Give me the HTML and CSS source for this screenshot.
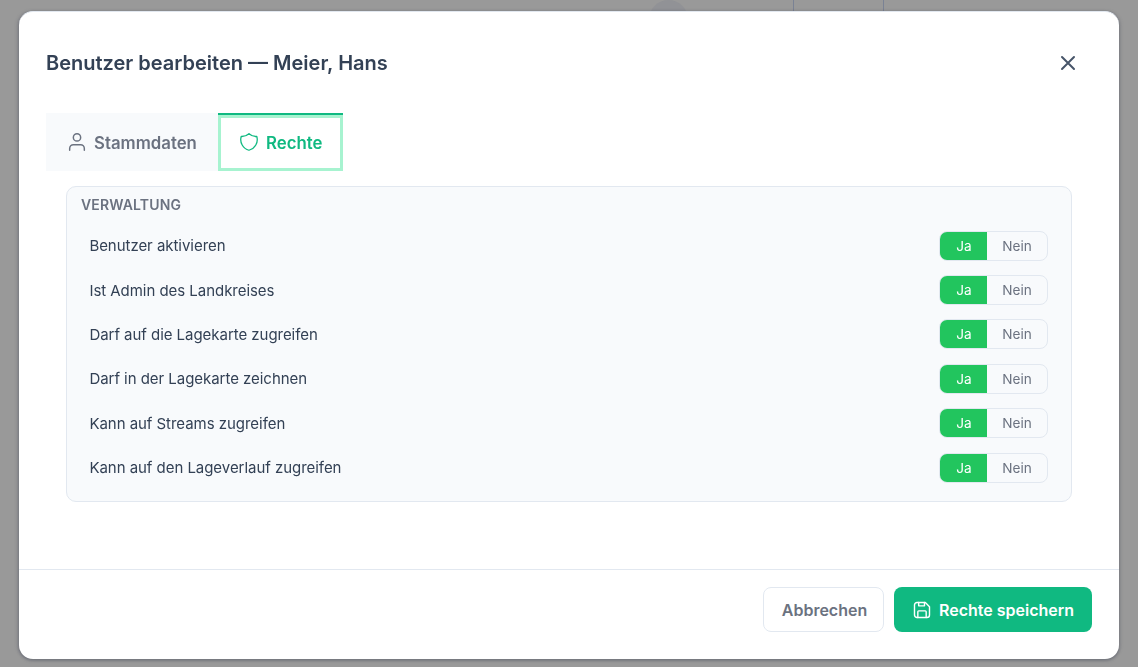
FILE: index.html
```html
<!DOCTYPE html>
<html lang="de">
<head>
<meta charset="utf-8">
<title>Benutzer bearbeiten</title>
<link rel="stylesheet" href="styles.css">
</head>
<body>
<div class="backdrop-page">
  <div class="avatar"></div>
  <div class="cell"></div>
</div>
<div class="overlay">
  <div class="modal">
    <header class="modal-head">
      <h2>Benutzer bearbeiten — Meier, Hans</h2>
      <button class="close" aria-label="Schließen">
        <svg width="24" height="24" viewBox="0 0 24 24" fill="none" stroke="currentColor" stroke-width="2" stroke-linecap="round"><path d="M6 6l12 12M18 6L6 18"/></svg>
      </button>
    </header>
    <nav class="tabs">
      <div class="tab">
        <svg width="22" height="22" viewBox="0 0 24 24" fill="none" stroke="currentColor" stroke-width="1.6" stroke-linecap="round" stroke-linejoin="round"><circle cx="12" cy="7" r="4"/><path d="M4 21v-2a4 4 0 0 1 4-4h8a4 4 0 0 1 4 4v2"/></svg>
        <span>Stammdaten</span>
      </div>
      <div class="tab active">
        <svg width="22" height="22" viewBox="0 0 24 24" fill="none" stroke="currentColor" stroke-width="1.4" stroke-linecap="round" stroke-linejoin="round"><path d="M12 3a12 12 0 0 0 8.500 3A12 12 0 0 1 12 21 12 12 0 0 1 3.500 6 12 12 0 0 0 12 3"/></svg>
        <span>Rechte</span>
      </div>
    </nav>
    <main class="modal-body">
      <section class="panel">
        <h3>VERWALTUNG</h3>
        <div class="row"><span>Benutzer aktivieren</span><div class="toggle"><b>Ja</b><i>Nein</i></div></div>
        <div class="row"><span>Ist Admin des Landkreises</span><div class="toggle"><b>Ja</b><i>Nein</i></div></div>
        <div class="row"><span>Darf auf die Lagekarte zugreifen</span><div class="toggle"><b>Ja</b><i>Nein</i></div></div>
        <div class="row"><span>Darf in der Lagekarte zeichnen</span><div class="toggle"><b>Ja</b><i>Nein</i></div></div>
        <div class="row"><span>Kann auf Streams zugreifen</span><div class="toggle"><b>Ja</b><i>Nein</i></div></div>
        <div class="row"><span>Kann auf den Lageverlauf zugreifen</span><div class="toggle"><b>Ja</b><i>Nein</i></div></div>
      </section>
    </main>
    <footer class="modal-foot">
      <button class="btn ghost">Abbrechen</button>
      <button class="btn primary">
        <svg width="20" height="20" viewBox="0 0 24 24" fill="none" stroke="currentColor" stroke-width="1.7" stroke-linecap="round" stroke-linejoin="round"><path d="M6 3h10l5 5v10a3 3 0 0 1-3 3H6a3 3 0 0 1-3-3V6a3 3 0 0 1 3-3"/><path d="M7 21v-7a1 1 0 0 1 1-1h8a1 1 0 0 1 1 1v7"/><path d="M15 3v4H8V3"/></svg>
        <span>Rechte speichern</span>
      </button>
    </footer>
  </div>
</div>
</body>
</html>
```
FILE: styles.css
```css
* { box-sizing: border-box; }
html, body { margin: 0; height: 100%; overflow: hidden; }
body { background: #999; font-family: Inter, "Liberation Sans", sans-serif; color: #334155; }
.backdrop-page { display: flex; height: 11px; padding-left: 649px; }
.avatar { width: 39px; height: 39px; border-radius: 50%; background: #919296; }
.cell { width: 91px; height: 11px; margin-left: 105px; border-left: 1px solid #7a8294; border-right: 1px solid #7a8294; }
.overlay { position: fixed; inset: 0; padding: 11px 19px 8px; }
.modal { height: 648px; background: #fff; border-radius: 14px; display: flex; flex-direction: column; border-top: 1px solid #e2e8f0; box-shadow: -2px 0 3px rgba(80,85,100,.25), 2px 0 3px rgba(80,85,100,.2), 0 2px 3px rgba(80,85,100,.4); }
.modal-head { display: flex; align-items: center; justify-content: space-between; height: 101px; padding: 0 39px 0 27px; }
h2 { margin: 0; font-size: 20px; line-height: 28px; font-weight: 600; color: #334155; }
.close { border: 0; background: none; padding: 0; width: 24px; height: 24px; color: #475569; display: flex; }
.tabs { display: flex; margin-left: 27px; height: 58px; }
.tab { display: flex; align-items: center; gap: 6px; width: 172px; padding-left: 20px; background: #f8fafc; border-top: 2px solid #f8fafc; color: #6b7280; font-size: 16.8px; font-weight: 600; }
.tab svg { margin-top: -3px; }
.tab.active { width: 125px; padding-left: 20px; background: #fff; color: #10b981; border-top-color: #10b981; box-shadow: inset 0 0 0 3px #a7f3d0; }
.modal-body { flex: 1; padding: 15px 47px 0; }
.panel { height: 316px; background: #f8fafc; border: 1px solid #e2e8f0; border-radius: 10px; padding: 8px 23px 0 14px; }
h3 { margin: 0 0 8.5px; font-size: 14px; line-height: 20px; font-weight: 600; color: #6b7280; letter-spacing: 0.15px; }
.row { display: flex; align-items: center; justify-content: space-between; height: 44.4px; padding-left: 8.4px; font-size: 15px; letter-spacing: -0.04px; color: #334155; }
.toggle { display: flex; width: 109px; height: 30px; border: 1px solid #e2e8f0; border-radius: 8px; overflow: hidden; font-size: 13.6px; }
.toggle b, .toggle i { display: flex; align-items: center; justify-content: center; font-style: normal; font-weight: 400; }
.toggle b { width: 47px; padding-left: 1px; background: #22c55e; color: #fff; }
.toggle i { flex: 1; color: #6b7280; }
.modal-foot { display: flex; justify-content: flex-end; gap: 10px; height: 90px; padding: 17px 27px 0 0; border-top: 1px solid #e2e8f0; }
.btn { height: 45px; border-radius: 8px; font: 600 16px Inter, "Liberation Sans", sans-serif; display: flex; align-items: center; justify-content: center; }
.ghost { width: 121px; padding-left: 8px; background: #fff; border: 1px solid #e2e8f0; color: #6b7280; }
.primary { width: 198px; gap: 7px; background: #10b981; border: 0; color: #fff; }
```
